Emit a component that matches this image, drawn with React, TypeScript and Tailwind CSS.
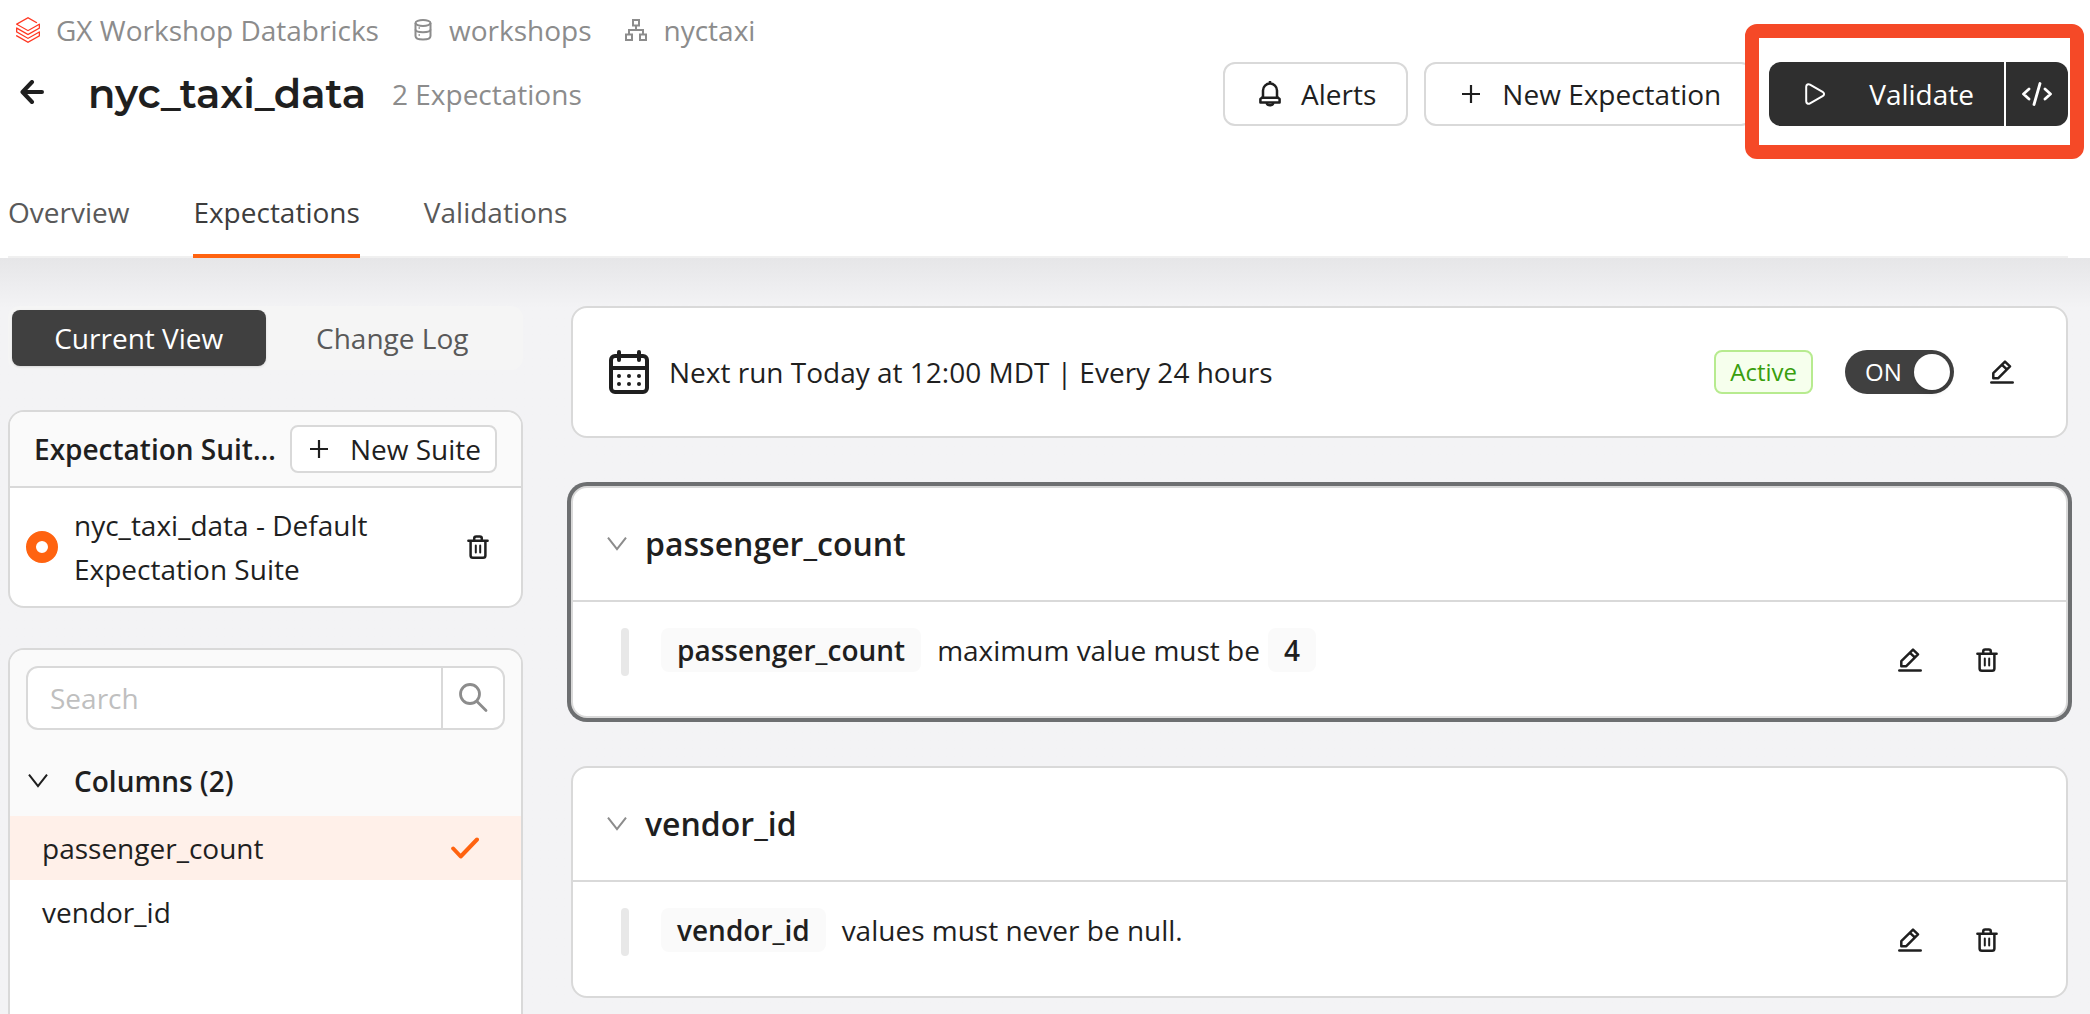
import { useState } from "react";
import type { ReactNode } from "react";

type IconProps = { className?: string };

function DatabricksIcon() {
  return (
    <svg viewBox="0.95 0 22.1 24" className="h-[26px] w-6 fill-[#ff3621]" aria-hidden="true">
      <path d="M.95 14.184L12 20.403l9.919-5.55v2.21L12 22.662l-10.484-5.96-.565.308v.77L12 24l11.05-6.218v-4.317l-.515-.309L12 19.118l-9.867-5.653v-2.21L12 16.805l11.05-6.218V6.32l-.515-.308L12 11.974 2.647 6.681 12 1.388l7.76 4.368.668-.411v-.566L12 0 .95 6.27v.72L12 13.207l9.919-5.55v2.26L12 15.52 1.516 9.56l-.565.308Z" />
    </svg>
  );
}

function DatabaseIcon() {
  return (
    <svg viewBox="-1 0 20 22" className="h-[22px] w-5 fill-none stroke-current stroke-2" aria-hidden="true">
      <ellipse cx="9" cy="4" rx="7.5" ry="3" />
      <path d="M1.5 4v13c0 2 3 3.500 7.500 3.500s7.500-1.500 7.500-3.500V4" />
      <path d="M1.500 10.500c0 1.600 3 2.700 7.500 2.700s7.500-1.100 7.500-2.700" />
      <path d="M4.500 9h1.500M4.500 16h1.500" strokeWidth="1.500" />
    </svg>
  );
}

function SchemaIcon() {
  return (
    <svg viewBox="0 0 22 22" className="size-[22px] fill-none stroke-current stroke-2" aria-hidden="true">
      <rect x="8" y="1" width="6" height="5.500" />
      <rect x="1" y="15.500" width="6" height="5.500" />
      <rect x="15" y="15.500" width="6" height="5.500" />
      <path d="M11 6.500V11M4 15.500V11h14v4.500" />
    </svg>
  );
}

function BackIcon() {
  return (
    <svg viewBox="0 0 24 24" className="size-6 fill-none stroke-current stroke-[4]" strokeLinecap="round" strokeLinejoin="round" aria-hidden="true">
      <path d="M22 12H3M12 2L2.500 12l9.500 10" />
    </svg>
  );
}

function BellIcon() {
  return (
    <svg viewBox="0 0 22 26" className="h-[26px] w-[22px] fill-none stroke-current" strokeWidth="2.500" strokeLinejoin="round" aria-hidden="true">
      <path d="M4 16V9.500a7 7 0 0 1 14 0V16l2.600 2v3.400H1.400V18z" />
      <path d="M2.500 16.700h17M11 2.500V0" />
      <path d="M7.600 22a3.500 3 0 0 0 6.800 0" />
    </svg>
  );
}

function PlusIcon() {
  return (
    <svg viewBox="0 0 18 18" className="size-[18px] fill-none stroke-current" strokeWidth="2.200" aria-hidden="true">
      <path d="M9 0v18M0 9h18" />
    </svg>
  );
}

function PlayIcon() {
  return (
    <svg viewBox="0 0 20 22" className="h-[22px] w-5 fill-none stroke-current stroke-2" strokeLinejoin="round" aria-hidden="true">
      <path d="M1.200 3.800v14.400c0 2.200 2 3.200 3.800 2.200l12.600-7.200c1.900-1.100 1.900-3.300 0-4.400L5 1.600C3.200.6 1.200 1.600 1.200 3.800z" />
    </svg>
  );
}

function CodeIcon() {
  return (
    <svg viewBox="0 0 30 24" className="h-6 w-[30px] fill-none stroke-current" strokeWidth="2.800" strokeLinecap="round" strokeLinejoin="round" aria-hidden="true">
      <path d="M7 7l-5.500 5L7 17M23 7l5.500 5-5.500 5M18 1.500L12 22.500" />
    </svg>
  );
}

function CalendarIcon() {
  return (
    <svg viewBox="0 0 40 44" className="h-11 w-10" aria-hidden="true">
      <rect x="2" y="6" width="36" height="36" rx="4" className="fill-none stroke-current stroke-[4]" />
      <path d="M2 18h36M10 2v8M30 2v8" className="fill-none stroke-current stroke-[4]" strokeLinecap="round" />
      <g className="fill-current">
        {[10, 20, 30].map((x) =>
          [26, 34].map((y) => <circle key={`${x}-${y}`} cx={x} cy={y} r="2" />),
        )}
      </g>
    </svg>
  );
}

function EditIcon() {
  return (
    <svg viewBox="0 0 24 24" className="size-6 fill-none stroke-current" strokeWidth="2.500" strokeLinecap="round" strokeLinejoin="round" aria-hidden="true">
      <path d="M1.300 22.600h21.400" />
      <path d="M3.300 18.200v-5L15 1.600l5 4.700L8.300 18.200zM12 4.800l4.800 4.600" />
    </svg>
  );
}

function TrashIcon() {
  return (
    <svg viewBox="0 0 22 24" className="h-6 w-[22px] fill-none stroke-current" strokeWidth="2.500" strokeLinecap="round" strokeLinejoin="round" aria-hidden="true">
      <path d="M1.400 5.800h19.200M7.200 5.500V3.400c0-1.200.8-2 2-2h3.600c1.200 0 2 .8 2 2v2.100M3.600 6v14.400c0 1.400.9 2.300 2.300 2.300h10.200c1.400 0 2.300-.9 2.300-2.300V6" />
      <path d="M8.800 10.500v7M13.200 10.500v7" strokeWidth="2" />
    </svg>
  );
}

function SearchIcon() {
  return (
    <svg viewBox="0 0 30 30" className="size-[30px] fill-none stroke-current" strokeWidth="2.800" strokeLinecap="round" aria-hidden="true">
      <circle cx="12" cy="11" r="9.500" />
      <path d="M19 18.500L28 27.500" />
    </svg>
  );
}

function ChevronIcon({ className = "" }: IconProps) {
  return (
    <svg viewBox="0 0 20 14" className={`h-3.5 w-5 shrink-0 fill-none stroke-current stroke-2 ${className}`} aria-hidden="true">
      <path d="M1 .6l9 11.600L19 .6" />
    </svg>
  );
}

function CheckIcon() {
  return (
    <svg viewBox="0 0 28 22" className="h-[22px] w-7 fill-none stroke-[#ff6310] stroke-[4]" strokeLinecap="round" strokeLinejoin="round" aria-hidden="true">
      <path d="M2.200 11.500l7.500 8L26 2.500" />
    </svg>
  );
}

function Breadcrumb({ icon, label }: { icon: ReactNode; label: string }) {
  return (
    <a href="#" className="flex items-center gap-4">
      {icon}
      {label}
    </a>
  );
}

function Tag({ children }: { children: ReactNode }) {
  return <span className="flex h-11 items-center rounded-lg bg-[#fafafa] px-4 font-semibold">{children}</span>;
}

function ExpectationCard({
  title,
  selected = false,
  children,
}: {
  title: string;
  selected?: boolean;
  children: ReactNode;
}) {
  return (
    <section
      className={`rounded-2xl border-2 border-[#d9d9d9] bg-white ${selected ? "ring-4 ring-[#6d6f71]" : ""}`}
    >
      <h2 className="border-b-2 border-[#d9d9d9]">
        <button type="button" aria-expanded="true" className="flex h-28 w-full items-center gap-[18px] px-[34px] text-[32px] font-semibold">
          <ChevronIcon className="text-[#8c8c8c]" />
          {title}
        </button>
      </h2>
      <div className="flex h-[114px] items-start pr-[68px] pl-12 pt-[26px]">
        <div className="mr-8 h-12 w-2 rounded bg-[#e8e8e8]" />
        <p className="flex flex-1 items-center">{children}</p>
        <div className="flex items-center gap-[54px] pt-5">
          <button type="button" aria-label={`Edit ${title} expectation`}>
            <EditIcon />
          </button>
          <button type="button" aria-label={`Delete ${title} expectation`}>
            <TrashIcon />
          </button>
        </div>
      </div>
    </section>
  );
}

export default function App() {
  const [query, setQuery] = useState("");
  const [on, setOn] = useState(true);

  return (
    <div className="flex h-screen flex-col overflow-hidden bg-[#f3f3f5] font-['Open_Sans',sans-serif] text-[28px] leading-11 text-[#1f1f1f]">
      <header className="shrink-0 bg-white pr-[22px] pl-2 pt-2">
        <nav aria-label="Breadcrumb" className="flex h-11 items-center gap-[34px] pl-2 text-[#8c8c8c]">
          <Breadcrumb icon={<DatabricksIcon />} label="GX Workshop Databricks" />
          <Breadcrumb icon={<DatabaseIcon />} label="workshops" />
          <Breadcrumb icon={<SchemaIcon />} label="nyctaxi" />
        </nav>

        <div className="flex items-center justify-between pt-[10px]">
          <div className="flex items-center pl-3">
            <button type="button" aria-label="Back" className="mr-11 mb-1">
              <BackIcon />
            </button>
            <h1 className="mr-[26px] font-[Montserrat,Inter,sans-serif] text-[40px] font-semibold">nyc_taxi_data</h1>
            <span className="text-[#8c8c8c]">2 Expectations</span>
          </div>
          <div className="flex items-center gap-4">
            <button type="button" className="flex h-16 items-center gap-5 rounded-xl border-2 border-[#d9d9d9] pr-[30px] pl-[34px]">
              <BellIcon />
              Alerts
            </button>
            <button type="button" className="flex h-16 items-center gap-[22px] rounded-xl border-2 border-[#d9d9d9] pr-[30px] pl-9">
              <PlusIcon />
              New Expectation
            </button>
            <div className="relative flex h-16 gap-0.5 text-white">
              <button type="button" className="flex items-center gap-11 rounded-l-xl bg-[#2f2f2f] pr-[30px] pl-9">
                <PlayIcon />
                Validate
              </button>
              <button type="button" aria-label="Show code" className="flex w-[62px] items-center justify-center rounded-r-xl bg-[#2f2f2f]">
                <CodeIcon />
              </button>
              <div className="pointer-events-none absolute -top-[38px] -right-4 -bottom-[33px] -left-6 rounded-xl border-[14px] border-[#f54927]" />
            </div>
          </div>
        </div>

        <nav aria-label="Sections" className="mt-[42px] flex h-[90px] gap-16 border-b-2 border-[#f0f0f0] text-[#595959]">
          <a href="#" className="pt-[22px]">Overview</a>
          <a href="#" aria-current="page" className="-mb-0.5 border-b-4 border-[#ff6310] pt-[22px] text-[#3d3d3d]">
            Expectations
          </a>
          <a href="#" className="pt-[22px]">Validations</a>
        </nav>
      </header>

      <main className="flex min-h-0 flex-1 gap-12 bg-linear-to-b from-[#e6e6e8] to-[#f3f3f5] to-[50px] pt-12 pr-[22px] pl-2">
        <aside className="flex w-[515px] shrink-0 flex-col">
          <div className="flex h-16 shrink-0 rounded-xl bg-[#f5f5f5] p-1">
            <button type="button" aria-pressed="true" className="flex-1 rounded-lg bg-[#404040] text-white shadow-sm">
              Current View
            </button>
            <button type="button" aria-pressed="false" className="flex-1 text-[#595959]">
              Change Log
            </button>
          </div>

          <section className="mt-10 overflow-hidden rounded-2xl border-2 border-[#d9d9d9] bg-white">
            <div className="flex h-[76px] items-center gap-3 border-b-2 border-[#d9d9d9] bg-[#fafafa] px-6">
              <h2 className="min-w-0 flex-1 truncate font-semibold">Expectation Suites</h2>
              <button type="button" className="flex h-12 shrink-0 items-center gap-[22px] rounded-lg border-2 border-[#d9d9d9] bg-white pr-[14px] pl-[18px]">
                <PlusIcon />
                New Suite
              </button>
            </div>
            <div className="flex h-[118px] items-center pr-8 pl-4">
              <input
                type="radio"
                id="suite-default"
                name="suite"
                defaultChecked
                className="size-8 shrink-0 appearance-none rounded-full border-[10px] border-[#ff6310] bg-white"
              />
              <label htmlFor="suite-default" className="ml-4 w-80">
                nyc_taxi_data - Default Expectation Suite
              </label>
              <button type="button" aria-label="Delete suite" className="ml-auto">
                <TrashIcon />
              </button>
            </div>
          </section>

          <section className="mt-10 flex-1 overflow-hidden rounded-t-2xl border-2 border-b-0 border-[#d9d9d9] bg-white">
            <div className="bg-[#fafafa] pt-4">
              <div className="mr-4 ml-4 flex h-16 overflow-hidden rounded-xl border-2 border-[#d9d9d9] bg-white">
                <input
                  type="search"
                  aria-label="Search columns"
                  placeholder="Search"
                  value={query}
                  onChange={(e) => setQuery(e.target.value)}
                  className="min-w-0 flex-1 px-[22px] outline-none placeholder:text-[#bfbfbf]"
                />
                <button type="button" aria-label="Search" className="flex w-[62px] items-center justify-center border-l-2 border-[#d9d9d9] text-[#8c8c8c]">
                  <SearchIcon />
                </button>
              </div>
              <button type="button" aria-expanded="true" className="mt-4 flex h-[70px] w-full items-center gap-[26px] pl-[18px] font-semibold">
                <ChevronIcon />
                Columns (2)
              </button>
            </div>
            <ul>
              <li>
                <button type="button" aria-pressed="true" className="flex h-16 w-full items-center justify-between bg-[#fff0e9] pr-[42px] pl-8">
                  passenger_count
                  <CheckIcon />
                </button>
              </li>
              <li>
                <button type="button" aria-pressed="false" className="flex h-16 w-full items-center pl-8">
                  vendor_id
                </button>
              </li>
            </ul>
          </section>
        </aside>

        <div className="flex min-w-0 flex-1 flex-col gap-12">
          <section className="flex h-[132px] shrink-0 items-center rounded-2xl border-2 border-[#d9d9d9] bg-white pr-[52px] pl-9">
            <CalendarIcon />
            <p className="ml-5 flex-1">Next run Today at 12:00 MDT | Every 24 hours</p>
            <span className="flex h-11 items-center rounded-lg border-2 border-[#b7eb8f] bg-[#f6ffed] px-[14px] text-2xl text-[#389e0d]">
              Active
            </span>
            <button
              type="button"
              role="switch"
              aria-checked={on}
              aria-label="Schedule"
              onClick={() => setOn(!on)}
              className="mr-9 ml-8 flex h-11 w-[109px] items-center justify-between rounded-full bg-[#404040] pr-1 pl-5 text-2xl text-white"
            >
              ON
              <span className="size-9 rounded-full bg-white shadow-md" />
            </button>
            <button type="button" aria-label="Edit schedule">
              <EditIcon />
            </button>
          </section>

          <ExpectationCard title="passenger_count" selected>
            <Tag>passenger_count</Tag>
            <span className="mr-2 ml-4">maximum value must be</span>
            <Tag>4</Tag>
          </ExpectationCard>

          <ExpectationCard title="vendor_id">
            <Tag>vendor_id</Tag>
            <span className="ml-4">values must never be null.</span>
          </ExpectationCard>
        </div>
      </main>
    </div>
  );
}
